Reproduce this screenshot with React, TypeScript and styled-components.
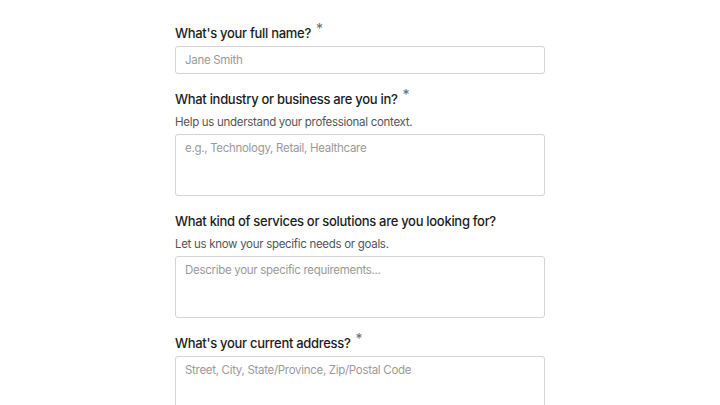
import styled, { createGlobalStyle } from 'styled-components';

const GlobalStyle = createGlobalStyle`
    html, body {
        margin: 0;
        background: #ffffff;
    }
    body {
        font-family: Inter, "Noto Sans", sans-serif;
        color: #1c1c1c;
        letter-spacing: -0.3px;
    }
`;

const Form = styled.form`
    display: flex;
    flex-direction: column;
    gap: 15px;
    margin: 0 auto;
    padding-top: 23px;
    width: 370px;
`;

const Field = styled.div`
    display: flex;
    flex-direction: column;
`;

const Label = styled.label`
    color: #1c1c1c;
    font-size: 13px;
    font-weight: 500;
    line-height: 20px;
    margin-bottom: 3px;
`;

const Star = styled.sup`
    color: #6b6b6b;
    font-size: 14px;
    font-weight: 400;
    line-height: 0;
    margin-left: 5px;
    vertical-align: 4px;
`;

const Hint = styled.p`
    color: #555555;
    font-size: 11.5px;
    line-height: 20px;
    margin: 0 0 2px;
`;

const Input = styled.input`
    border: 1px solid #d4d4d4;
    border-radius: 3px;
    box-sizing: border-box;
    color: #1c1c1c;
    font-family: inherit;
    font-size: 11.5px;
    height: 28px;
    letter-spacing: -0.3px;
    padding: 0 9px;
    width: 100%;

    &::placeholder {
        color: #9a9a9a;
    }
`;

const TextArea = styled.textarea`
    border: 1px solid #d4d4d4;
    border-radius: 3px;
    box-sizing: border-box;
    color: #1c1c1c;
    font-family: inherit;
    font-size: 11.5px;
    height: 62px;
    letter-spacing: -0.3px;
    line-height: 17px;
    padding: 5px 9px;
    resize: none;
    width: 100%;

    &::placeholder {
        color: #9a9a9a;
    }
`;

const fields = [
    { label: "What industry or business are you in?", required: true, hint: 'Help us understand your professional context.', placeholder: 'e.g., Technology, Retail, Healthcare' },
    { label: 'What kind of services or solutions are you looking for?', required: false, hint: 'Let us know your specific needs or goals.', placeholder: 'Describe your specific requirements...' },
    { label: "What's your current address?", required: true, hint: '', placeholder: 'Street, City, State/Province, Zip/Postal Code' },
];

export default function App() {
    return (
        <>
            <GlobalStyle />
            <Form onSubmit={e => e.preventDefault()}>
                <Field>
                    <Label>What's your full name?<Star>*</Star></Label>
                    <Input placeholder="Jane Smith" />
                </Field>
                {fields.map(({ label, required, hint, placeholder }) =>
                    <Field key={label}>
                        <Label>{label}{required && <Star>*</Star>}</Label>
                        {hint !== '' && <Hint>{hint}</Hint>}
                        <TextArea placeholder={placeholder} />
                    </Field>
                )}
            </Form>
        </>
    );
}
